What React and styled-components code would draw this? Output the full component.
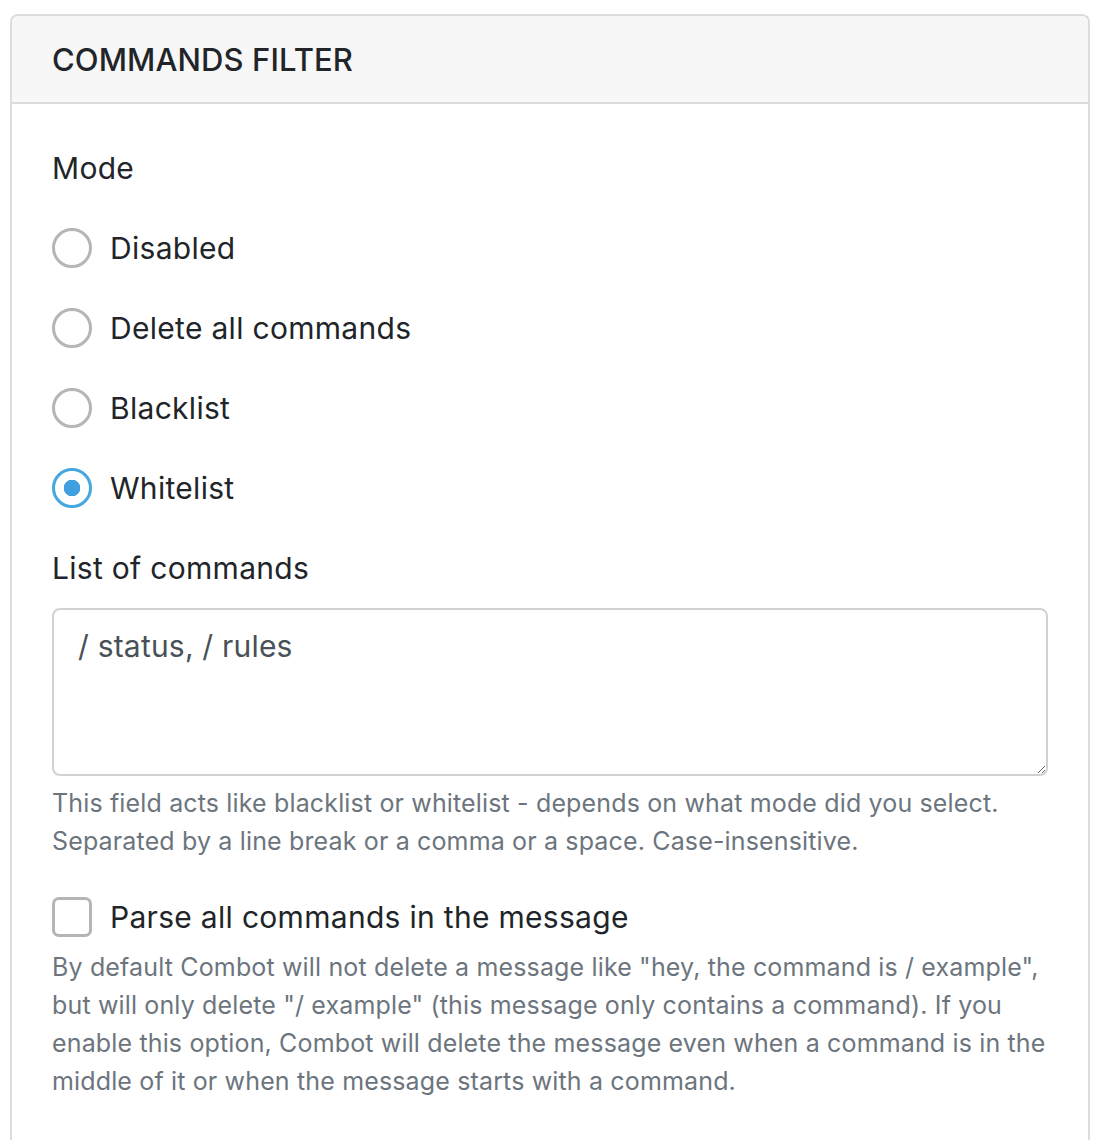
import styled, { createGlobalStyle } from "styled-components";

const GlobalStyle = createGlobalStyle`
  body {
    margin: 0;
    background: #ffffff;
    font-family: Inter, "Noto Sans", "Liberation Sans", sans-serif;
    color: #212529;
  }
`;

const Page = styled.div`
  padding: 14px 6px 0 10px;
`;

const Card = styled.section`
  border: 2px solid #dcdcdc;
  border-bottom: none;
  border-radius: 8px 8px 0 0;
  background: #ffffff;
  overflow: hidden;
`;

const CardHeader = styled.header`
  height: 86px;
  display: flex;
  align-items: center;
  padding: 0 40px;
  background: #f7f7f7;
  border-bottom: 2px solid #dcdcdc;
  font-size: 31px;
  font-weight: 500;
  letter-spacing: 0.1px;
  text-transform: uppercase;
`;

const CardBody = styled.div`
  padding: 44px 40px 40px;
`;

const Label = styled.div`
  font-size: 30px;
  line-height: 40px;
  letter-spacing: 0.3px;
  margin-bottom: ${(p) => p.$gap || 40}px;
`;

const RadioList = styled.div`
  display: flex;
  flex-direction: column;
  gap: 40px;
  margin-bottom: 40px;
`;

const Option = styled.label`
  display: flex;
  align-items: center;
  gap: 18px;
  height: 40px;
  font-size: 30px;
  line-height: 40px;
  letter-spacing: 0.3px;
  cursor: pointer;
`;

const Radio = styled.input.attrs({ type: "radio" })`
  appearance: none;
  margin: 0;
  width: 40px;
  height: 40px;
  flex: none;
  border-radius: 50%;
  border: 3px solid #b5b5b5;
  box-sizing: border-box;
  background: #ffffff;
  &:checked {
    border-color: #45a7df;
    background: radial-gradient(circle, #3f9fe0 0 8px, #ffffff 8.5px);
  }
`;

const Checkbox = styled.input.attrs({ type: "checkbox" })`
  appearance: none;
  margin: 0;
  width: 40px;
  height: 40px;
  flex: none;
  border-radius: 7px;
  border: 3px solid #b5b5b5;
  box-sizing: border-box;
  background: #ffffff;
`;

const TextArea = styled.textarea`
  display: block;
  width: 100%;
  height: 168px;
  box-sizing: border-box;
  margin: 0;
  padding: 14px 24px;
  border: 2px solid #cfd2d5;
  border-radius: 8px;
  font-family: inherit;
  font-size: 30px;
  line-height: 45px;
  letter-spacing: 0.2px;
  color: #495057;
  resize: vertical;
  outline: none;
`;

const Help = styled.p`
  margin: ${(p) => p.$top || 0}px 0 0;
  font-size: 25px;
  line-height: 38px;
  letter-spacing: 0.15px;
  color: #6c757d;
`;

const CheckRow = styled(Option)`
  margin-top: 37px;
`;

const modes = ["Disabled", "Delete all commands", "Blacklist", "Whitelist"];

export default function App() {
  return (
    <>
      <GlobalStyle />
      <Page>
        <Card>
          <CardHeader>Commands filter</CardHeader>
          <CardBody>
            <Label>Mode</Label>
            <RadioList>
              {modes.map((m) => (
                <Option key={m}>
                  <Radio name="mode" defaultChecked={m === "Whitelist"} />
                  {m}
                </Option>
              ))}
            </RadioList>
            <Label $gap={20}>List of commands</Label>
            <TextArea defaultValue="/ status, / rules" />
            <Help $top={8}>
              This field acts like blacklist or whitelist - depends on what mode did you select.
              <br />
              Separated by a line break or a comma or a space. Case-insensitive.
            </Help>
            <CheckRow>
              <Checkbox />
              Parse all commands in the message
            </CheckRow>
            <Help $top={11}>
              By default Combot will not delete a message like "hey, the command is / example",
              but will only delete "/ example" (this message only contains a command). If you
              enable this option, Combot will delete the message even when a command is in the
              middle of it or when the message starts with a command.
            </Help>
          </CardBody>
        </Card>
      </Page>
    </>
  );
}
